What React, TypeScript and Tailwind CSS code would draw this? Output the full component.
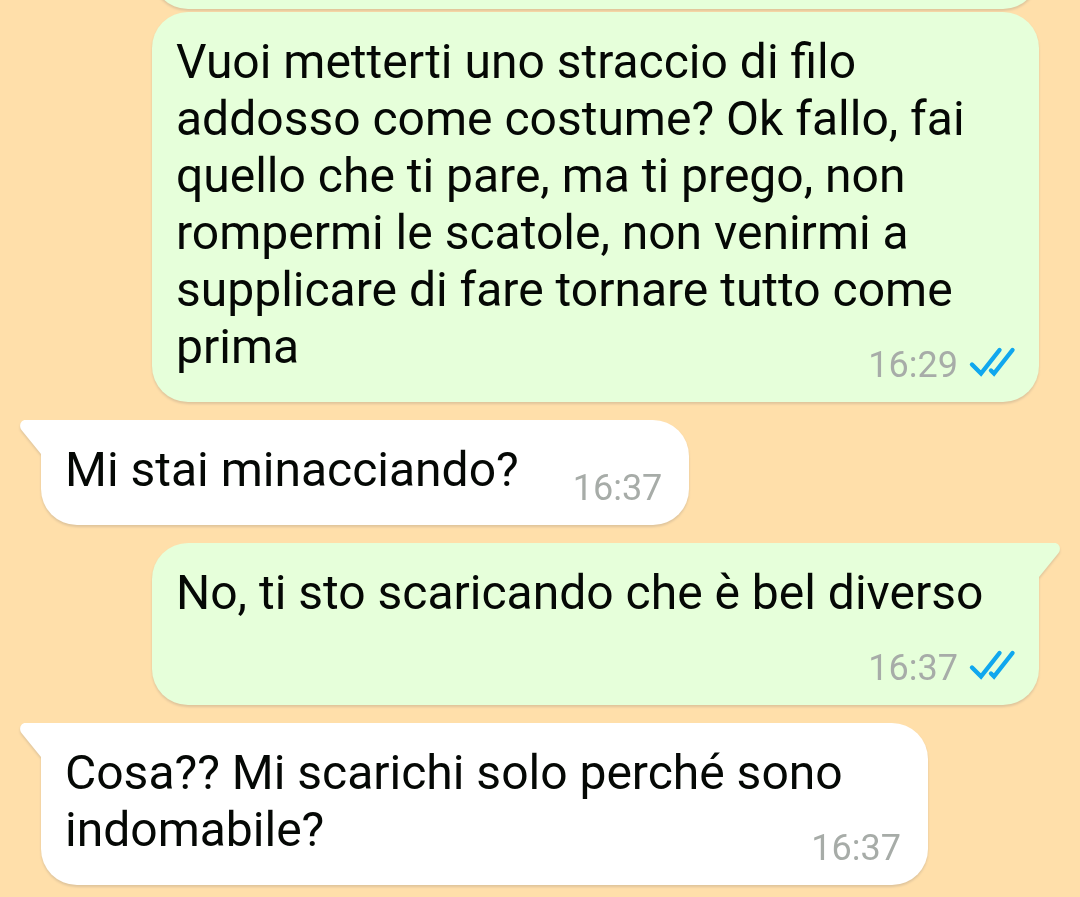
interface Message {
  text: string;
  time: string;
  sent?: boolean;
  tail?: boolean;
}

const MESSAGES: Message[] = [
  {
    text: "Vuoi metterti uno straccio di filo addosso come costume? Ok fallo, fai quello che ti pare, ma ti prego, non rompermi le scatole, non venirmi a supplicare di fare tornare tutto come prima",
    time: "16:29",
    sent: true,
  },
  { text: "Mi stai minacciando?", time: "16:37", tail: true },
  {
    text: "No, ti sto scaricando che è bel diverso",
    time: "16:37",
    sent: true,
    tail: true,
  },
  {
    text: "Cosa?? Mi scarichi solo perché sono indomabile?",
    time: "16:37",
    tail: true,
  },
];

const ReadTicks = () => (
  <svg
    className="h-8 w-11 overflow-visible"
    viewBox="0 0 44 32"
    fill="none"
    stroke="#10a7ee"
    strokeWidth="4.4"
    strokeLinecap="round"
    role="img"
    aria-label="Letto"
  >
    <path d="M2 15.5 L11 24.5 L29.5 1" />
    <path d="M21 21.5 L24 24.5 L42.5 1" />
  </svg>
);

const Tail = ({ sent }: { sent?: boolean }) => (
  <svg
    className={
      sent
        ? "absolute top-0 -right-[21px] h-9 w-[22px] -scale-x-100"
        : "absolute top-0 -left-[21px] h-9 w-[22px]"
    }
    viewBox="0 0 22 36"
    fill={sent ? "#e6ffda" : "#ffffff"}
    aria-hidden="true"
  >
    <path d="M22 0H5.5C.5 0-1.5 6 1.5 10L21 34H22Z" />
  </svg>
);

const Bubble = ({ text, time, sent, tail }: Message) => {
  const side = sent
    ? "self-end ml-[152px] mr-[41px] bg-[#e6ffda] pr-[25px]"
    : "self-start ml-[41px] mr-[152px] bg-white pr-[27px]";
  const corner = !tail
    ? "rounded-[36px]"
    : sent
      ? "rounded-[36px] rounded-tr-none"
      : "rounded-[36px] rounded-tl-none";

  return (
    <article
      className={`relative flow-root pt-[21px] pb-4 pl-6 text-[48px] leading-[57px] text-[#050805] drop-shadow-[0_2px_1px_#dfc49b] ${side} ${corner}`}
    >
      {tail && <Tail sent={sent} />}
      <span>{text}</span>
      {/* floats onto the last line when there is room, otherwise drops below it */}
      <div className="float-right mt-[26px] ml-[54px] flex items-center gap-3 text-[36px] leading-[42px] text-[#a7aca8]">
        <time>{time}</time>
        {sent && <ReadTicks />}
      </div>
    </article>
  );
};

const App = () => (
  <main className="flex min-h-screen flex-col overflow-hidden bg-[#ffdfaa] pb-3 font-[Roboto,sans-serif]">
    {/* end of the previous message, scrolled out of view */}
    <div className="-mt-[71px] mr-[41px] mb-[3px] ml-[152px] h-20 shrink-0 rounded-[36px] bg-[#e6ffda] drop-shadow-[0_2px_1px_#dfc49b]" />
    <div className="flex flex-col gap-[18px]">
      {MESSAGES.map((message) => (
        <Bubble key={message.text} {...message} />
      ))}
    </div>
  </main>
);

export default App;
